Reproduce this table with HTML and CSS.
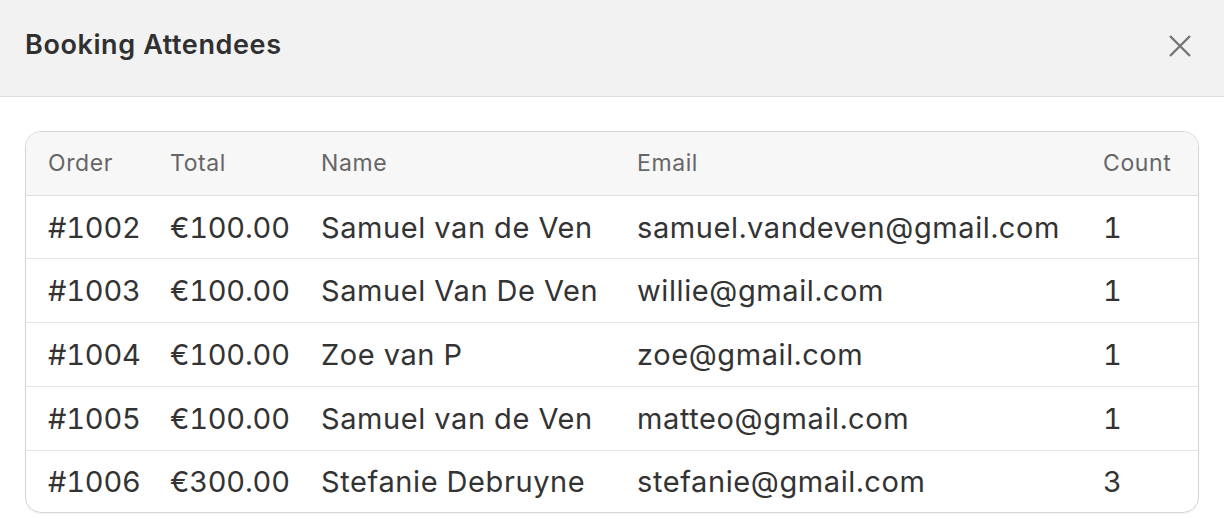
FILE: index.html
```html
<!DOCTYPE html>
<html lang="en">
<head>
<meta charset="utf-8">
<title>Booking Attendees</title>
<link rel="stylesheet" href="styles.css">
</head>
<body>
<div class="modal">
  <header class="modal-header">
    <h1 class="modal-title">Booking Attendees</h1>
    <button class="close-btn" aria-label="Close">
      <svg width="24" height="24" viewBox="0 0 24 24"><path d="M2 2 L22 22 M22 2 L2 22" stroke="#767676" stroke-width="2.4" stroke-linecap="butt" fill="none"/></svg>
    </button>
  </header>
  <div class="modal-body">
    <div class="table-card">
      <table class="attendees">
        <colgroup>
          <col class="c-order"><col class="c-total"><col class="c-name"><col class="c-email"><col class="c-count">
        </colgroup>
        <thead>
          <tr><th>Order</th><th>Total</th><th>Name</th><th>Email</th><th>Count</th></tr>
        </thead>
        <tbody>
          <tr><td class="num">#1002</td><td class="num">€100.00</td><td>Samuel van de Ven</td><td>samuel.vandeven@gmail.com</td><td>1</td></tr>
          <tr><td class="num">#1003</td><td class="num">€100.00</td><td>Samuel Van De Ven</td><td>willie@gmail.com</td><td>1</td></tr>
          <tr><td class="num">#1004</td><td class="num">€100.00</td><td>Zoe van P</td><td>zoe@gmail.com</td><td>1</td></tr>
          <tr><td class="num">#1005</td><td class="num">€100.00</td><td>Samuel van de Ven</td><td>matteo@gmail.com</td><td>1</td></tr>
          <tr><td class="num">#1006</td><td class="num">€300.00</td><td>Stefanie Debruyne</td><td>stefanie@gmail.com</td><td>3</td></tr>
        </tbody>
      </table>
    </div>
  </div>
</div>
</body>
</html>
```
FILE: styles.css
```css
* { box-sizing: border-box; }
html, body { margin: 0; padding: 0; background: #ffffff; }
body {
  font-family: Inter, "Liberation Sans", Arial, sans-serif;
  color: #333333;
  width: 1224px;
  height: 532px;
  overflow: hidden;
}
.modal-header {
  height: 97px;
  background: #f2f2f2;
  border-bottom: 1px solid #dedede;
  display: flex;
  align-items: center;
  justify-content: space-between;
  padding: 0 32px 0 25px;
}
.modal-title {
  margin: 0;
  font-size: 27px;
  font-weight: 600;
  letter-spacing: 0.6px;
  color: #303030;
  padding-bottom: 7px;
}
.close-btn {
  border: 0;
  background: transparent;
  padding: 0;
  width: 24px;
  height: 24px;
  display: flex;
  margin-bottom: 5px;
}
.modal-body {
  padding: 34px 25px 0 25px;
}
.table-card {
  border: 1px solid #d6d6d6;
  border-radius: 16px;
  overflow: hidden;
  box-shadow: 0 1px 2px rgba(0,0,0,0.06);
}
.attendees {
  width: 100%;
  border-collapse: collapse;
  table-layout: fixed;
}
.c-order { width: 122px; }
.c-total { width: 151px; }
.c-name { width: 316px; }
.c-email { width: 466px; }
.c-count { width: auto; }
.attendees th {
  background: #f7f7f7;
  height: 63px;
  text-align: left;
  font-weight: 400;
  font-size: 23px;
  letter-spacing: 0.6px;
  color: #666666;
  padding: 0 0 0 22px;
  border-bottom: 1px solid #e0e0e0;
}
.attendees td {
  height: 64px;
  font-size: 29px;
  letter-spacing: 0.6px;
  font-variant-numeric: tabular-nums;
  color: #333333;
  padding: 1px 0 0 22px;
  border-top: 1px solid #e6e6e6;
  white-space: nowrap;
}
.attendees td.num { letter-spacing: -0.2px; }
.attendees tbody tr:first-child td { border-top: 0; height: 63px; }
.attendees tbody tr:last-child td { height: 62px; }
```
